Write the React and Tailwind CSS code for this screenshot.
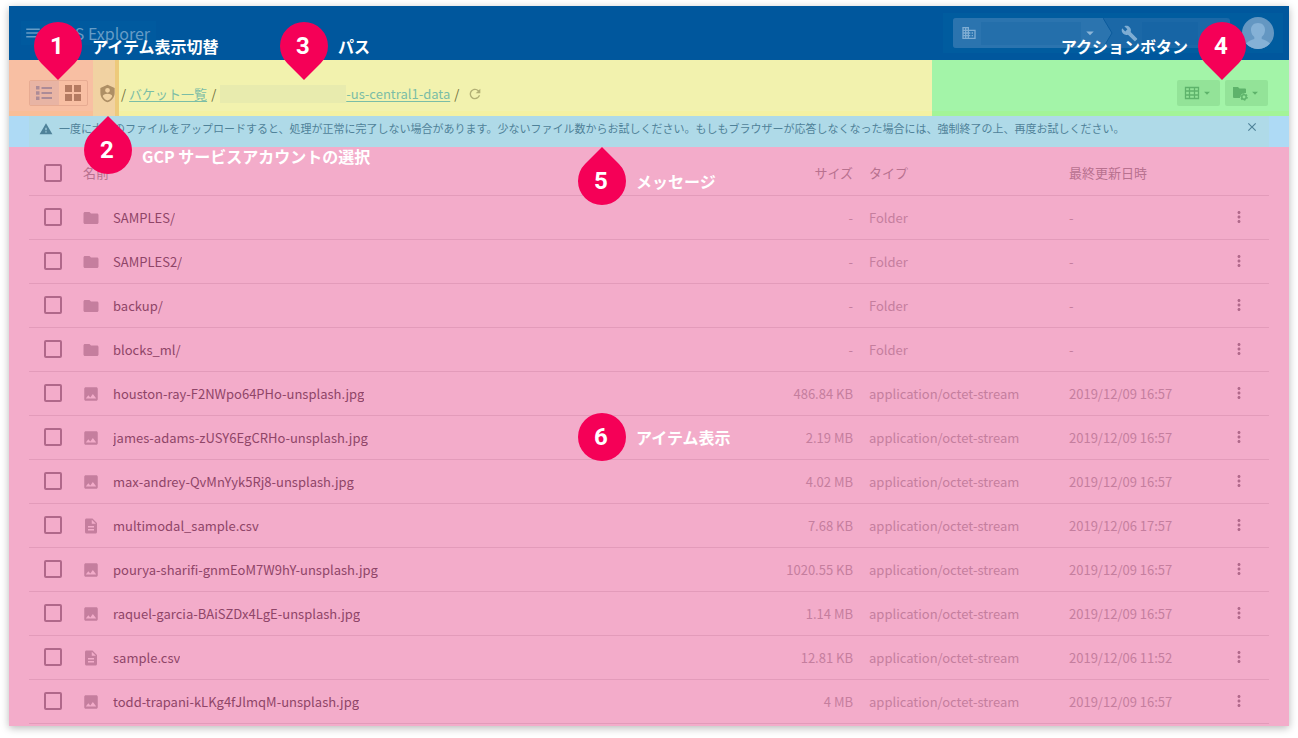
import React from 'react';
import {
  MdMenu,
  MdDomain,
  MdBuild,
  MdRefresh,
  MdFolder,
  MdImage,
  MdDescription,
  MdMoreVert,
  MdWarning,
  MdClose,
  MdArrowDropDown,
} from 'react-icons/md';

const JPG = 'application/octet-stream';

const items = [
  { kind: 'folder', name: 'SAMPLES/', size: '-', type: 'Folder', date: '-' },
  { kind: 'folder', name: 'SAMPLES2/', size: '-', type: 'Folder', date: '-' },
  { kind: 'folder', name: 'backup/', size: '-', type: 'Folder', date: '-' },
  { kind: 'folder', name: 'blocks_ml/', size: '-', type: 'Folder', date: '-' },
  { kind: 'image', name: 'houston-ray-F2NWpo64PHo-unsplash.jpg', size: '486.84 KB', type: JPG, date: '2019/12/09 16:57' },
  { kind: 'image', name: 'james-adams-zUSY6EgCRHo-unsplash.jpg', size: '2.19 MB', type: JPG, date: '2019/12/09 16:57' },
  { kind: 'image', name: 'max-andrey-QvMnYyk5Rj8-unsplash.jpg', size: '4.02 MB', type: JPG, date: '2019/12/09 16:57' },
  { kind: 'text', name: 'multimodal_sample.csv', size: '7.68 KB', type: JPG, date: '2019/12/06 17:57' },
  { kind: 'image', name: 'pourya-sharifi-gnmEoM7W9hY-unsplash.jpg', size: '1020.55 KB', type: JPG, date: '2019/12/09 16:57' },
  { kind: 'image', name: 'raquel-garcia-BAiSZDx4LgE-unsplash.jpg', size: '1.14 MB', type: JPG, date: '2019/12/09 16:57' },
  { kind: 'text', name: 'sample.csv', size: '12.81 KB', type: JPG, date: '2019/12/06 11:52' },
  { kind: 'image', name: 'todd-trapani-kLKg4fJlmqM-unsplash.jpg', size: '4 MB', type: JPG, date: '2019/12/09 16:57' },
];

const kindIcons = { folder: MdFolder, image: MdImage, text: MdDescription };

function Header() {
  return (
    <header className="flex h-[54px] items-center justify-between bg-[#00579d] pl-3 pr-1.5">
      <div className="flex h-6 items-center gap-2 bg-[#005a9f] pl-[3px] pr-1.5">
        <button type="button" aria-label="メニュー" className="text-[#669cc6]">
          <MdMenu size={18} />
        </button>
        <h1 className="pl-1 text-base leading-6 text-[#669cc6]">GCS Explorer</h1>
      </div>
      <div className="flex h-10 items-center gap-3 bg-[#005c9f] pl-2.5 pr-[9px]">
        <div className="flex h-[30px] overflow-hidden rounded-[3px] bg-[#1b68a7]">
          <button type="button" aria-label="組織" className="flex items-center bg-[#2b74af] pl-2 pr-1">
            <MdDomain size={16} className="text-[#7fadd3]" />
            <span className="ml-1 h-[23px] w-[100px] bg-[#246fab]" />
            <MdArrowDropDown size={18} className="text-[#8db5d7]" />
          </button>
          <svg width="10" height="30" viewBox="0 0 10 30" aria-hidden="true">
            <path d="M0 0 9 15 0 30z" fill="#2b74af" />
            <path d="M0 0 9 15 0 30" fill="none" stroke="#0b5a9c" />
          </svg>
          <button type="button" aria-label="プロジェクト" className="flex items-center pl-2 pr-8">
            <MdBuild size={17} className="text-[#7fadd3]" />
            <span className="ml-1 h-[23px] w-[56px] bg-[#1765a5]" />
          </button>
        </div>
        <svg width="32" height="32" viewBox="0 0 32 32" aria-label="ユーザー" role="img">
          <circle cx="16" cy="16" r="16" fill="#6497c2" />
          <path
            d="M16 6c-4.600 0-7.300 3.200-7 7.500.2 3 1.600 5.200 3.300 6.500v2c-3 1-6.300 2-8.300 4.600a16 16 0 0 0 24 0c-2-2.600-5.300-3.600-8.300-4.600v-2c1.700-1.300 3.100-3.500 3.300-6.500.3-4.300-2.400-7.500-7-7.500z"
            fill="#85b1d6"
          />
        </svg>
      </div>
    </header>
  );
}

function ShieldAccount() {
  return (
    <svg width="19" height="19" viewBox="0 0 24 24" fill="currentColor" aria-hidden="true">
      <path d="M12 1 3 5v6c0 5.550 3.840 10.740 9 12 5.160-1.260 9-6.450 9-12V5l-9-4m0 4a3 3 0 0 1 3 3 3 3 0 0 1-3 3 3 3 0 0 1-3-3 3 3 0 0 1 3-3m5.130 12c-1.210 1.850-3.020 3.240-5.130 3.920-2.110-.68-3.920-2.070-5.130-3.920-.34-.5-.63-1-.87-1.530 0-1.650 2.710-3 6-3s6 1.320 6 3c-.24.530-.53 1.030-.87 1.530z" />
    </svg>
  );
}

function Toolbar() {
  return (
    <div className="flex h-14">
      <div className="flex w-[84px] items-center border-b-[5px] border-[#f9be97] bg-[#f8bfa3] pl-5 pt-[15px]">
        <div className="flex h-[26px] w-[59px] shrink-0 rounded-[2px] border border-[#e7ab92]">
          <button type="button" aria-label="リスト表示" className="flex flex-1 items-center justify-center bg-[#e8b4a4] text-[#ac8b97]">
            <svg width="16" height="14" viewBox="0 0 16 14" fill="currentColor" aria-hidden="true">
              <path d="M0 0h3.500v3.500H0zM5.500 1H16v2H5.500zM0 5.250h3.500v3.500H0zM5.500 6H16v2H5.500zM0 10.500h3.500V14H0zM5.500 11H16v2H5.500z" />
            </svg>
          </button>
          <button type="button" aria-label="グリッド表示" className="flex flex-1 items-center justify-center text-[#b57b62]">
            <svg width="16" height="16" viewBox="0 0 16 16" fill="currentColor" aria-hidden="true">
              <path d="M0 0h7v7H0zM9 0h7v7H9zM0 9h7v7H0zM9 9h7v7H9z" />
            </svg>
          </button>
        </div>
      </div>
      <div className="flex w-[26px] items-center justify-center border-r-4 border-[#edca7b] bg-[#f1d2a2] pl-1.5 pt-2.5">
        <button type="button" aria-label="GCP サービスアカウントの選択" className="text-[#ae8f65]">
          <ShieldAccount />
        </button>
      </div>
      <nav aria-label="パス" className="flex flex-1 items-center border-b-[5px] border-[#f4f1a2] bg-[#f2f2ae] pt-[17px] text-[13px] leading-5 text-[#6f6d3c]">
        <span className="px-0.5">/</span>
        <a href="#buckets" className="ml-px text-[#7bbda6] underline underline-offset-2">バケット一覧</a>
        <span className="mx-1">/</span>
        <a href="#bucket" aria-label="us-central1-data" className="flex items-center text-[#7bbda6] underline underline-offset-2">
          <span className="h-[18px] w-[126px] bg-[#e8ebae]" />
          <span>-us-central1-data</span>
        </a>
        <span className="ml-1 mr-2">/</span>
        <button type="button" aria-label="更新" className="text-[#b2b075]">
          <MdRefresh size={16} />
        </button>
      </nav>
      <div className="flex w-[357px] items-center justify-end gap-[5px] border-b-[5px] border-[#a3f498] bg-[#a3f4a8] pr-[21px] pt-[15px]">
        <button type="button" aria-label="表示項目" className="flex h-[26px] w-[43px] items-center justify-center rounded-[2px] bg-[#93e398] text-[#5eb36b]">
          <svg width="16" height="16" viewBox="0 0 16 16" fill="none" stroke="currentColor" aria-hidden="true">
            <path d="M1.500 2.500h13v11h-13zM1.500 6h13M1.500 10h13M5.500 2.500v11M10.500 2.500v11" strokeWidth="1.300" />
          </svg>
          <MdArrowDropDown size={14} />
        </button>
        <button type="button" aria-label="フォルダー操作" className="flex h-[26px] w-[43px] items-center justify-center rounded-[2px] bg-[#93e398] text-[#5eb36b]">
          <svg width="16" height="16" viewBox="0 0 16 16" aria-hidden="true">
            <path d="M1 2h5l1.500 1.500H13a1 1 0 0 1 1 1V8a5 5 0 0 0-6 5H2a1 1 0 0 1-1-1z" fill="currentColor" />
            <circle cx="12" cy="12" r="2.200" fill="none" stroke="currentColor" strokeWidth="1.500" />
            <circle cx="12" cy="12" r="3.200" fill="none" stroke="currentColor" strokeWidth="1.200" strokeDasharray="1.700 1.650" />
          </svg>
          <MdArrowDropDown size={14} />
        </button>
      </div>
    </div>
  );
}

function Message() {
  return (
    <div className="bg-[#aedaf5] px-5">
      <div className="flex h-[31px] items-start bg-[#afdae8] px-2.5 pt-1 text-[#4f8299]">
        <MdWarning size={14} className="mt-0.5 shrink-0" />
        <p className="ml-1.5 flex-1 text-[11px] leading-4">
          一度に大量のファイルをアップロードすると、処理が正常に完了しない場合があります。少ないファイル数からお試しください。もしもブラウザーが応答しなくなった場合には、強制終了の上、再度お試しください。
        </p>
        <button type="button" aria-label="閉じる" className="text-[#4f8299]">
          <MdClose size={14} />
        </button>
      </div>
    </div>
  );
}

function Checkbox({ label }) {
  return (
    <input
      type="checkbox"
      aria-label={label}
      className="block size-[18px] appearance-none rounded-[2px] border-2 border-[#b0688a] checked:bg-[#b0688a]"
    />
  );
}

function ItemTable() {
  return (
    <div className="bg-[#f3acca] px-5 pb-0.5">
      <table className="w-full table-fixed border-separate border-spacing-0 text-[13px] leading-5 text-[#c57e9e] [&_td]:border-b [&_td]:border-[#e39bba] [&_th]:border-b [&_th]:border-[#e39bba]">
        <colgroup>
          <col className="w-[46px]" />
          <col />
          <col className="w-[120px]" />
          <col className="w-[200px]" />
          <col className="w-[148px]" />
          <col className="w-[60px]" />
        </colgroup>
        <thead>
          <tr className="h-[49px] text-[#b8718f]">
            <th scope="col" className="pl-[15px] pt-1"><Checkbox label="すべて選択" /></th>
            <th scope="col" className="px-2 pt-1 text-left font-normal">名前</th>
            <th scope="col" className="px-2 pt-1 text-right font-normal">サイズ</th>
            <th scope="col" className="px-2 pt-1 text-left font-normal">タイプ</th>
            <th scope="col" className="px-2 pt-1 text-left font-normal">最終更新日時</th>
            <th scope="col" aria-label="操作" />
          </tr>
        </thead>
        <tbody>
          {items.map((item) => {
            const Icon = kindIcons[item.kind];
            return (
              <tr key={item.name} className="h-11">
                <td className="pb-0.5 pl-[15px]"><Checkbox label={item.name} /></td>
                <td className="px-2 text-[#8f4568]">
                  <div className="flex items-center gap-[13px]">
                    <Icon size={18} className="-ml-px shrink-0 text-[#c57e9e]" />
                    <span className="truncate">{item.name}</span>
                  </div>
                </td>
                <td className="px-2 text-right">{item.size}</td>
                <td className="px-2">{item.type}</td>
                <td className="px-2">{item.date}</td>
                <td className="pb-0.5">
                  <button type="button" aria-label="メニューを開く" className="mx-auto block text-[#b0688a]">
                    <MdMoreVert size={18} />
                  </button>
                </td>
              </tr>
            );
          })}
        </tbody>
      </table>
    </div>
  );
}

const pinShapes = {
  down: 'absolute inset-0 rotate-45 rounded-full rounded-br-none bg-[#f50057]',
  up: 'absolute inset-0 rotate-45 rounded-full rounded-tl-none bg-[#f50057]',
  round: 'absolute inset-0 rounded-full bg-[#f50057]',
};

function Pin({ number, label, tip, place, labelClass = '' }) {
  return (
    <div className={`pointer-events-none absolute flex items-center gap-2.5 ${place}`}>
      <div className="relative flex size-12 shrink-0 items-center justify-center">
        <span className={pinShapes[tip]} />
        <span className="relative pr-0.5 font-[Roboto,sans-serif] text-2xl font-bold leading-6 text-white">{number}</span>
      </div>
      <span className={`whitespace-nowrap text-base font-bold leading-6 text-white ${labelClass}`}>{label}</span>
    </div>
  );
}

export default function App() {
  return (
    <main lang="ja" className="bg-white px-[9px] pb-3 pt-1.5 font-['Noto_Sans_CJK_JP',sans-serif]">
      <div className="relative shadow-[0_2px_8px_rgba(0,0,0,0.28)]">
        <Header />
        <Toolbar />
        <Message />
        <ItemTable />
        <Pin number="1" label="アイテム表示切替" tip="down" place="left-[25px] top-4" />
        <Pin number="2" label="GCP サービスアカウントの選択" tip="up" place="left-[75px] top-[120px]" labelClass="pt-3" />
        <Pin number="3" label="パス" tip="down" place="left-[271px] top-4" />
        <Pin number="4" label="アクションボタン" tip="down" place="right-[43px] top-4 flex-row-reverse" />
        <Pin number="5" label="メッセージ" tip="up" place="left-[569px] top-[151px]" />
        <Pin number="6" label="アイテム表示" tip="round" place="left-[569px] top-[407px]" />
      </div>
    </main>
  );
}
